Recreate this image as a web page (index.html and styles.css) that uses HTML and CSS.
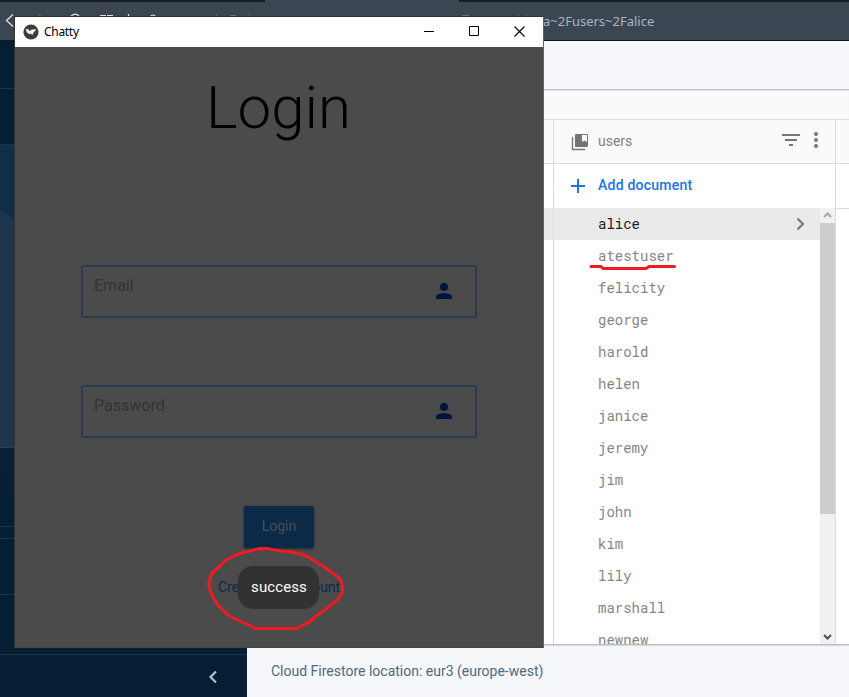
FILE: index.html
```html
<!DOCTYPE html>
<html lang="en">
<head>
<meta charset="utf-8">
<title>Chatty</title>
<link rel="stylesheet" href="styles.css">
</head>
<body>
<div class="screen">
  <header class="browser">
    <svg class="browser-marks" width="544" height="40" fill="none">
      <path d="M13 14.500L6.500 20.500L13 26.500" stroke="#dfe4e9" stroke-width="1.300"/>
      <path d="M39 14.500l2 2" stroke="#768391"/>
      <path d="M70 17q5-5 9-1M100 15.500h6M107 15.500h6M128.500 14v3M150 17q3-4 6 0" stroke="#dce2e8" stroke-width="1.200"/>
      <path d="M216 15.500h1M230 15.500h6M249 15v2M407 15.500v2M412 15.500v2M462 15.500h7M518 15v2M526 15v2" stroke="#67737f"/>
    </svg>
    <span class="url">a~2Fusers~2Falice</span>
  </header>
  <div class="page">
    <nav class="sidebar">
      <div class="nav-row r1"></div>
      <div class="nav-row r2"></div>
      <div class="nav-row active"><svg width="247" height="302"><path d="M0 64L70 124V302H0Z" fill="#1f354e"/></svg></div>
      <div class="nav-row r4"></div>
      <div class="nav-row r5"></div>
      <div class="nav-row r6"></div>
      <div class="nav-row r7"></div>
      <div class="collapse"><svg width="10" height="14" fill="none"><path d="M8 1.500L2.500 7L8 12.500" stroke="#b4bec8" stroke-width="2.200"/></svg></div>
    </nav>
    <main class="main">
      <div class="topbar"></div>
      <div class="crumbs"></div>
      <div class="panels">
        <section class="panel before"><div class="head"></div><div class="add"></div><div class="selected"></div></section>
        <section class="panel users">
          <div class="head">
            <svg class="collection" width="18" height="18" viewBox="0 0 18 18"><path d="M1.500 4V16.500H14" fill="none" stroke="#757575" stroke-width="1.300"/><path d="M5 1H16q1 0 1 1V13q0 1-1 1H5q-1 0-1-1V2q0-1 1-1Z" fill="#757575"/><path d="M11 2h5v7l-2.500-1.500L11 9Z" fill="#fafafa"/></svg>
            <span class="head-title">users</span>
            <svg class="filter" width="18" height="12"><path d="M0 0h18v2H0zM3 5h12v2H3zM7 10h4v2H7z" fill="#757575"/></svg>
            <svg class="more" width="4" height="16" fill="#757575"><circle cx="2" cy="2" r="2"/><circle cx="2" cy="8" r="2"/><circle cx="2" cy="14" r="2"/></svg>
          </div>
          <div class="add"><svg width="14" height="14"><path d="M6 0h2v6h6v2H8v6H6V8H0V6h6z" fill="#1a73e8"/></svg><span>Add document</span></div>
          <div class="scroller">
            <ul class="docs">
              <li class="current">alice<svg width="9" height="14" fill="none"><path d="M1.500 1.500L7 7L1.500 12.500" stroke="#757575" stroke-width="2"/></svg></li>
              <li>atestuser</li><li>felicity</li><li>george</li><li>harold</li><li>helen</li><li>janice</li><li>jeremy</li><li>jim</li><li>john</li><li>kim</li><li>lily</li><li>marshall</li><li>newnew</li>
            </ul>
            <div class="track">
              <svg width="15" height="15" fill="none"><path d="M4 9L7.500 5.500L11 9" stroke="#a6a6a6" stroke-width="2"/></svg>
              <div class="thumb"></div>
              <svg class="down" width="15" height="15" fill="none"><path d="M4 6L7.500 9.500L11 6" stroke="#505050" stroke-width="2"/></svg>
            </div>
          </div>
        </section>
        <section class="panel after"><div class="head"></div><div class="add"></div></section>
      </div>
      <footer class="location">Cloud Firestore location: eur3 (europe-west)</footer>
    </main>
  </div>

  <div class="window">
    <div class="titlebar">
      <svg class="logo" width="16" height="16"><circle cx="8" cy="8" r="7.600" fill="#3c3c3c"/><path d="M2.700 5.300L5.300 5L6.700 7.200L8.600 5.500L13.600 5.300L10.600 8.400L9.500 11L7.500 9.500L6.600 10.600L3.700 8.300Z" fill="#eee"/></svg>
      <span class="title">Chatty</span>
      <svg width="10" height="11"><path d="M0 5h10v1H0z"/></svg>
      <svg class="control" width="10" height="11" fill="none"><path d="M.5 .5h9v9h-9z" stroke="#000"/></svg>
      <svg class="control last" width="11" height="11" fill="none"><path d="M.5 .5l10 10M10.500 .5l-10 10" stroke="#000" stroke-width="1.100"/></svg>
    </div>
    <div class="login">
      <h1>Login</h1>
      <div class="field email"><span>Email</span><svg width="16" height="16" fill="#001440"><circle cx="8" cy="4" r="4"/><path d="M0 16v-2c0-5 16-5 16 0v2z"/></svg></div>
      <div class="field password"><span>Password</span><svg width="16" height="16" fill="#001440"><circle cx="8" cy="4" r="4"/><path d="M0 16v-2c0-5 16-5 16 0v2z"/></svg></div>
      <div class="submit">Login</div>
      <div class="create"><span>Create new account</span><div class="toast">success</div></div>
    </div>
  </div>

  <svg class="ink" width="849" height="697" fill="none" stroke="#ed1c24" stroke-width="3" stroke-linecap="round" stroke-linejoin="round">
    <path d="M591 266.500H601L603 268.500H646L649 266.500H674.500"/>
    <path d="M264 549L255 549.500L251 551L244 552L234 556L226 560L219 567L212 573L210 579L208.500 584L210 590L213 597L217 604L223 610L229 616L240 621L249 625L255 628.500H297L303 625L308 623L316 616L325 610L332 604L338 599L342 593L342.500 587L341 580L335 575L326 568L316 562L308 557L301 554L291 552L281 551L272 549.500L267 548.500H258"/>
  </svg>
</div>
</body>
</html>
```
FILE: styles.css
```css
* { box-sizing: border-box; }
body { margin: 0; overflow: hidden; font-family: Roboto, sans-serif; }
svg { display: block; flex: none; }
.screen { position: relative; width: 849px; height: 697px; overflow: hidden; }

.browser { display: flex; height: 41px; background: #3b4652; border-bottom: 1px solid #12171b; background-image: linear-gradient(#171b1f, #171b1f), linear-gradient(#171b1f, #171b1f); background-size: 265px 2px, 390px 2px; background-position: 0 0, 459px 0; background-repeat: no-repeat; }
.url { margin-left: -1px; padding-top: 11px; font: 13px/20px "Noto Sans", sans-serif; color: #a9b5c2; white-space: nowrap; }

.page { display: flex; height: 656px; }
.sidebar { width: 247px; background: #051e34; }
.nav-row { border-bottom: 1px solid #1d3549; background: #051e34; }
.r1 { height: 48px; }
.r2 { height: 56px; }
.active { height: 303px; background: #122f48; border-color: #254259; overflow: hidden; }
.r4 { height: 79px; background: linear-gradient(#0a2137, #051e34); }
.r5 { height: 12px; }
.r6 { height: 56px; }
.r7 { height: 60px; }
.collapse { display: flex; justify-content: flex-end; padding: 15px 29px 0 0; }

.main { display: flex; flex-direction: column; width: 602px; background: #f5f7fa; }
.topbar { height: 49px; background: #f5f7fa; border-bottom: 1px solid #bfc1c4; }
.crumbs { height: 30px; background: #fafafa; border-bottom: 1px solid #dcdcdc; box-shadow: inset 0 1px 1px #e3e3e4; }
.panels { display: flex; height: 525px; border-bottom: 1px solid #bdbdbd; background: #fff; box-shadow: 0 1px 1px #d9dbde; }
.panel { border-right: 1px solid #dcdcdc; }
.before { width: 307px; }
.users { display: flex; flex-direction: column; width: 282px; }
.after { width: 13px; border: 0; }
.head { display: flex; align-items: center; height: 44px; background: #fafafa; border-bottom: 1px solid #dcdcdc; padding-right: 17px; }
.before .head, .after .head { padding: 0; }
.collection { margin-left: 17px; }
.head-title { margin: -2px 0 0 9px; flex: 1; font-size: 14px; color: #808080; }
.filter { margin: -4px 14px 0 0; }
.more { margin-top: -3px; }
.add { height: 44px; display: flex; align-items: center; padding: 0 0 2px 17px; color: #1a73e8; font-size: 14px; font-weight: 500; letter-spacing: .23px; }
.add svg { margin: 1px 13px 0 0; }
.before .add { padding: 0; }
.after .add { height: 45px; padding: 0; border-bottom: 1px solid #dcdcdc; }
.selected { height: 32px; background: #eaeaea; }
.scroller { display: flex; height: 436px; overflow: hidden; }
.docs { width: 266px; margin: 0; padding: 0; list-style: none; font: 14px/32px "Roboto Mono", "Liberation Mono", monospace; color: #858585; }
.docs li { display: flex; align-items: center; justify-content: space-between; height: 32px; padding: 0 15px 0 44px; }
.docs .current { color: #212121; background: #eaeaea; }
.track { display: flex; flex-direction: column; width: 15px; background: #f1f1f1; }
.thumb { height: 291px; background: #cdcdcd; }
.down { margin-top: auto; }
.location { padding: 15px 0 0 24px; font-size: 14px; line-height: 22px; color: #506783; }

.window { position: absolute; left: 14px; top: 16px; width: 530px; height: 632px; border: 1px solid #343434; border-right-color: #646464; border-bottom-color: #444; background: #4b4b4b; }
.titlebar { display: flex; align-items: center; height: 30px; padding: 0 18px 0 8px; background: #fff; }
.title { flex: 1; margin-left: 5px; font: 12px/18px "Noto Sans", sans-serif; color: #000; letter-spacing: -.3px; }
.titlebar svg:not(.logo) { margin-top: -1px; }
.control { margin-left: 35px; }
.control.last { margin-left: 35px; }
.login { display: flex; flex-direction: column; align-items: center; }
h1 { margin: 24px 1px 0 0; font-size: 60px; line-height: 74px; font-weight: 300; color: #000; }
.field { display: flex; justify-content: space-between; width: 396px; height: 53px; border: 2px solid #293b4d; border-radius: 2px; padding: 9px 23px 0 11px; font-size: 16px; line-height: 20px; color: #343434; }
.field svg { margin-top: 7px; }
.email { margin-top: 120px; }
.password { margin-top: 67px; }
.submit { width: 70px; height: 42px; margin-top: 68px; border-radius: 2px; background: #0b2a48; box-shadow: 0 1px 3px #292929; color: #4a4f55; font-size: 14px; line-height: 41px; text-align: center; }
.create { position: relative; margin-top: 28px; font-size: 14px; line-height: 22px; color: #0b2a48; letter-spacing: -.1px; white-space: nowrap; }
.toast { position: absolute; left: 50%; top: -10px; margin-left: -40.5px; width: 81px; height: 43px; border-radius: 15px; background: #323232; color: #fff; font-size: 15px; line-height: 42px; text-align: center; letter-spacing: .1px; }
.ink { position: absolute; left: 0; top: 0; pointer-events: none; }
```
